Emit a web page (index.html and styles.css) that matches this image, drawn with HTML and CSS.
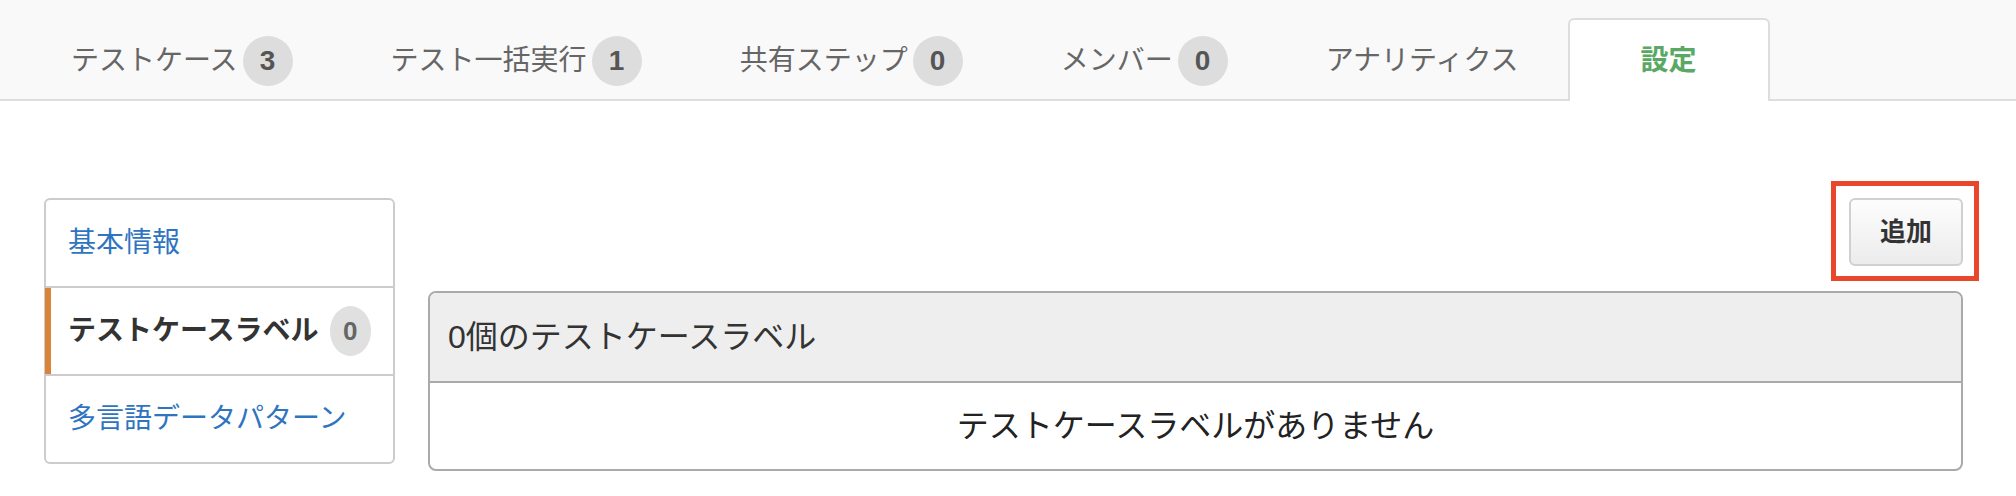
FILE: index.html
```html
<!DOCTYPE html>
<html lang="ja">
<head>
<meta charset="utf-8">
<title>設定 - テストケースラベル</title>
<link rel="stylesheet" href="styles.css">
</head>
<body>
<div class="tabbar">
  <div class="tab"><span>テストケース</span><span class="badge">3</span></div>
  <div class="tab"><span>テスト一括実行</span><span class="badge">1</span></div>
  <div class="tab"><span>共有ステップ</span><span class="badge">0</span></div>
  <div class="tab"><span>メンバー</span><span class="badge">0</span></div>
  <div class="tab"><span>アナリティクス</span></div>
  <div class="tab active"><span>設定</span></div>
</div>
<div class="main">
  <nav class="side">
    <a class="side-item">基本情報</a>
    <a class="side-item active"><span>テストケースラベル</span><span class="side-badge">0</span></a>
    <a class="side-item">多言語データパターン</a>
  </nav>
  <section class="content">
    <div class="toolbar">
      <span class="highlight"><button class="btn">追加</button></span>
    </div>
    <div class="panel">
      <div class="panel-head">0個のテストケースラベル</div>
      <div class="panel-body">テストケースラベルがありません</div>
    </div>
  </section>
</div>
</body>
</html>
```
FILE: styles.css
```css
* { box-sizing: border-box; }
body {
  margin: 0;
  background: #fff;
  color: #333;
  font-family: "Liberation Sans", "Noto Sans CJK JP", sans-serif;
}
.tabbar {
  display: flex;
  height: 101px;
  padding: 18px 0 0 22px;
  background: #f9f9f9;
  border-bottom: 2px solid #ddd;
}
.tab {
  display: flex;
  align-items: center;
  justify-content: center;
  min-width: 202px;
  padding: 0 47px;
  margin-bottom: -2px;
  border: 2px solid transparent;
  border-bottom: 0;
  border-radius: 6px 6px 0 0;
  font-size: 28px;
  line-height: 1;
  color: #666;
  white-space: nowrap;
}
.tab.active {
  background: #fff;
  border-color: #ddd;
  color: #5ba865;
  font-weight: bold;
}
.badge {
  display: flex;
  align-items: center;
  justify-content: center;
  width: 50px;
  height: 50px;
  margin-left: 5px;
  border-radius: 50%;
  background: #ddd;
  color: #555;
  font-weight: bold;
  font-size: 28px;
}
.main {
  display: flex;
  align-items: flex-start;
  gap: 33px;
  padding: 97px 53px 0 44px;
}
.side {
  flex: none;
  width: 351px;
  display: flex;
  flex-direction: column;
  border: 2px solid #ccc;
  border-radius: 6px;
}
.side-item {
  position: relative;
  display: flex;
  align-items: center;
  height: 86px;
  padding: 0 22px;
  font-size: 28px;
  line-height: 1;
  color: #2f74c0;
  text-decoration: none;
  white-space: nowrap;
}
.side-item + .side-item {
  height: 88px;
  border-top: 2px solid #ccc;
}
.side-item.active {
  color: #333;
  font-weight: bold;
}
.side-item.active::before {
  content: "";
  position: absolute;
  left: -1px;
  top: 0;
  bottom: 0;
  width: 6px;
  background: #d9843b;
}
.side-badge {
  display: flex;
  align-items: center;
  justify-content: center;
  width: 50px;
  height: 50px;
  margin-left: 11px;
  border-radius: 50%;
  background: #e0e0e0;
  color: #666;
  font-size: 26px;
  font-weight: bold;
}
.content {
  flex: 1;
  display: flex;
  flex-direction: column;
}
.toolbar {
  display: flex;
  justify-content: flex-end;
}
.highlight {
  display: flex;
  margin: -17px -16px -15px 0;
  padding: 12px 11px 10px 13px;
  border: 5px solid #e8472e;
}
.btn {
  height: 68px;
  padding: 0 29px;
  border: 2px solid #d0d0d0;
  border-radius: 6px;
  background: linear-gradient(#fdfdfd, #ececec);
  color: #333;
  font-family: "Liberation Sans", "Noto Sans CJK JP", sans-serif;
  font-size: 26px;
  font-weight: bold;
  line-height: 1;
}
.panel {
  margin-top: 25px;
  border: 2px solid #aaa;
  border-radius: 8px;
  overflow: hidden;
}
.panel-head {
  display: flex;
  align-items: center;
  height: 90px;
  padding: 0 18px;
  background: #eee;
  border-bottom: 2px solid #aaa;
  font-size: 32px;
  line-height: 1;
  color: #333;
}
.panel-body {
  display: flex;
  align-items: center;
  justify-content: center;
  height: 86px;
  font-size: 32px;
  line-height: 1;
  color: #222;
}
```
